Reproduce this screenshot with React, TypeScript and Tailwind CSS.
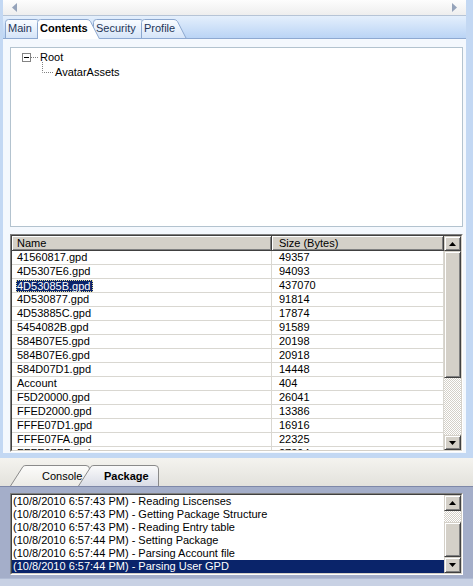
import React from 'react';

const rows: [string, string][] = [
  ['41560817.gpd', '49357'],
  ['4D5307E6.gpd', '94093'],
  ['4D53085B.gpd', '437070'],
  ['4D530877.gpd', '91814'],
  ['4D53885C.gpd', '17874'],
  ['5454082B.gpd', '91589'],
  ['584B07E5.gpd', '20198'],
  ['584B07E6.gpd', '20918'],
  ['584D07D1.gpd', '14448'],
  ['Account', '404'],
  ['F5D20000.gpd', '26041'],
  ['FFED2000.gpd', '13386'],
  ['FFFE07D1.gpd', '16916'],
  ['FFFE07FA.gpd', '22325'],
  ['FFFE07FF.gpd', '27394'],
];

const logs = [
  '(10/8/2010 6:57:43 PM) - Reading Liscenses',
  '(10/8/2010 6:57:43 PM) - Getting Package Structure',
  '(10/8/2010 6:57:43 PM) - Reading Entry table',
  '(10/8/2010 6:57:44 PM) - Setting Package',
  '(10/8/2010 6:57:44 PM) - Parsing Account file',
  '(10/8/2010 6:57:44 PM) - Parsing User GPD',
];

function Tri({ up }: { up: boolean }) {
  return (
    <svg width="7" height="4" viewBox="0 0 7 4">
      <path d={up ? 'M3.5 0 L7 4 H0 Z' : 'M0 0 H7 L3.5 4 Z'} fill="#000" />
    </svg>
  );
}

function ScrollBtn({ up, h }: { up: boolean; h: string }) {
  return (
    <div
      className={`${h} w-[17px] shrink-0 flex items-center justify-center bg-[#d4d0c8] border border-t-[#d4d0c8] border-l-[#d4d0c8] border-b-[#404040] border-r-[#404040] shadow-[inset_1px_1px_0_#ffffff,inset_-1px_-1px_0_#808080]`}
    >
      <Tri up={up} />
    </div>
  );
}

function Track({ h }: { h: string }) {
  return (
    <div
      className={`${h} w-[17px] shrink-0 bg-[repeating-conic-gradient(#ffffff_0_25%,#d4d0c8_0_50%)] bg-size-[2px_2px]`}
    />
  );
}

function Thumb({ h }: { h: string }) {
  return (
    <div
      className={`${h} w-[17px] shrink-0 bg-[#d4d0c8] border border-t-[#d4d0c8] border-l-[#d4d0c8] border-b-[#404040] border-r-[#404040] shadow-[inset_1px_1px_0_#ffffff,inset_-1px_-1px_0_#808080]`}
    />
  );
}

function TopTab({
  label,
  w,
  cls,
  selected,
}: {
  label: string;
  w: number;
  cls: string;
  selected?: boolean;
}) {
  const h = 20;
  const id = 'tt' + label;
  const d = `M0.5 ${h} V3.5 Q0.5 0.5 3.5 0.5 H${w - 13} Q${w - 11} 0.5 ${w - 9.5} 2.5 L${w - 0.5} ${h}`;
  return (
    <div className={`relative shrink-0 h-[20px] mb-[-1px] ${cls} ${selected ? 'z-10' : ''}`}>
      <svg className="absolute inset-0" width={w} height={h} viewBox={`0 0 ${w} ${h}`}>
        <defs>
          <linearGradient id={id} x1="0" y1="0" x2="0" y2="1">
            <stop offset="0" stopColor={selected ? '#ffffff' : '#fbfdff'} />
            <stop offset="1" stopColor={selected ? '#ffffff' : '#d3e3f8'} />
          </linearGradient>
        </defs>
        <path d={d + (selected ? '' : ' Z')} fill={`url(#${id})`} stroke="none" />
        <path d={d} fill="none" stroke="#8da8cf" strokeWidth="1" />
        {!selected && <line x1="0" y1={h - 0.5} x2={w} y2={h - 0.5} stroke="#8ea9d1" />}
      </svg>
      <span
        className={`relative block pl-[3px] pt-[2px] leading-[15px] text-[11px] ${selected ? 'font-bold text-black' : 'text-[#1e3557]'}`}
      >
        {label}
      </span>
    </div>
  );
}

function BottomTab({
  label,
  w,
  cls,
  selected,
  textCls,
}: {
  label: string;
  w: number;
  cls: string;
  selected?: boolean;
  textCls: string;
}) {
  const h = 21;
  const id = 'bt' + label;
  const d = `M0.5 ${h} L${13} 1.5 Q${14} 0.5 ${16} 0.5 H${w - 4} Q${w - 0.5} 0.5 ${w - 0.5} 4 V${h}`;
  return (
    <div className={`relative shrink-0 h-[21px] ${cls} ${selected ? 'z-10' : ''}`}>
      <svg className="absolute inset-0" width={w} height={h} viewBox={`0 0 ${w} ${h}`}>
        <defs>
          <linearGradient id={id} x1="0" y1="0" x2="0" y2="1">
            <stop offset="0" stopColor={selected ? '#fbfbfb' : '#fcfcfb'} />
            <stop offset="1" stopColor={selected ? '#d9dce6' : '#ecebe6'} />
          </linearGradient>
        </defs>
        <path d={d + ' Z'} fill={`url(#${id})`} stroke="none" />
        <path d={d} fill="none" stroke="#8a8a8a" strokeWidth="1" />
      </svg>
      <span
        className={`relative block pt-[4px] leading-[15px] text-[11px] text-black ${selected ? 'font-bold' : ''} ${textCls}`}
      >
        {label}
      </span>
    </div>
  );
}

function Sunken({ cls, children }: { cls: string; children: React.ReactNode }) {
  return (
    <div className={`${cls} border border-t-[#808080] border-l-[#808080] border-b-white border-r-white`}>
      <div className="w-full h-full border border-t-[#404040] border-l-[#404040] border-b-[#d4d0c8] border-r-[#d4d0c8] bg-white overflow-hidden flex">
        {children}
      </div>
    </div>
  );
}

export default function App() {
  return (
    <div className="w-[473px] h-[586px] overflow-hidden flex flex-col bg-[#c3d8f3] font-['Liberation_Sans',Arial,sans-serif] text-[11px] text-black select-none">
      {/* top section */}
      <div className="h-[458px] shrink-0 flex flex-col pl-[3px] pr-[7px]">
        {/* horizontal scroll */}
        <div className="h-[16px] shrink-0 flex items-center justify-between px-[9px] bg-[linear-gradient(#fdfdfd,#eeeeee)] border-b border-[#b6c4d6]">
          <svg width="5" height="9" viewBox="0 0 5 9">
            <path d="M5 0 V9 L0 4.5 Z" fill="#95a3ba" />
          </svg>
          <svg width="5" height="9" viewBox="0 0 5 9">
            <path d="M0 0 V9 L5 4.5 Z" fill="#95a3ba" />
          </svg>
        </div>
        {/* tab strip */}
        <div className="h-[23px] shrink-0 flex items-end border-b border-[#8ea9d1] bg-[linear-gradient(#e4effc,#bad4f5)]">
          <TopTab label="Main" w={44} cls="w-[44px] ml-[2px]" />
          <TopTab label="Contents" w={63} cls="w-[63px] ml-[-12px]" selected />
          <TopTab label="Security" w={60} cls="w-[60px] ml-[-7px]" />
          <TopTab label="Profile" w={46} cls="w-[46px] ml-[-12px]" />
        </div>
        {/* content */}
        <div className="h-[414px] shrink-0 bg-[#f4f8fd] pl-[7px] pr-[3px] pt-[8px] flex flex-col gap-[7px]">
          {/* tree */}
          <div className="h-[180px] w-[453px] shrink-0 bg-white border border-[#b3c3cf] pt-[2px]">
            <div className="h-[15px] flex items-center">
              <div className="ml-[11px] w-[9px] h-[9px] border border-[#848484] bg-white flex items-center justify-center">
                <div className="w-[5px] h-[1px] bg-black" />
              </div>
              <svg width="8" height="1" className="shrink-0">
                <line x1="0" y1="0.5" x2="8" y2="0.5" stroke="#808080" strokeDasharray="1 1" />
              </svg>
              <span className="ml-[1px] leading-[15px]">Root</span>
            </div>
            <div className="h-[15px] flex items-center relative">
              <svg width="13" height="14" className="absolute left-[31px] top-[-3px] overflow-visible">
                <path d="M0.5 0 V10.5 H12" fill="none" stroke="#808080" strokeDasharray="1 1" />
              </svg>
              <span className="ml-[44px] leading-[15px]">AvatarAssets</span>
            </div>
          </div>
          {/* list view */}
          <Sunken cls="h-[218px] w-[453px] shrink-0">
            <div className="flex-1 flex flex-col min-w-0">
              <div className="h-[15px] shrink-0 flex bg-[#d4d0c8]">
                <div className="w-[260px] h-[15px] shrink-0 pl-[5px] leading-[14px] border-b border-r border-[#404040] shadow-[inset_1px_1px_0_#ffffff,inset_-1px_-1px_0_#808080]">
                  Name
                </div>
                <div className="w-[172px] h-[15px] shrink-0 pl-[7px] leading-[14px] border-b border-r border-[#404040] shadow-[inset_1px_1px_0_#ffffff,inset_-1px_-1px_0_#808080]">
                  Size (Bytes)
                </div>
              </div>
              <div className="flex-1 overflow-hidden">
                {rows.map(([n, s], i) => (
                  <div key={n} className="h-[14px] flex border-b border-[#d9d7d1]">
                    <div className="w-[260px] shrink-0 h-[13px] border-r border-[#d9d7d1] flex items-center">
                      {i === 2 ? (
                        <span className="ml-[4px] h-[12px] pl-[0px] pr-[2px] bg-[#0a246a] text-white leading-[10px] border border-dotted border-[#e6dc97]">
                          {n}
                        </span>
                      ) : (
                        <span className="pl-[5px] leading-[13px]">{n}</span>
                      )}
                    </div>
                    <div className="w-[172px] shrink-0 h-[13px] border-r border-[#d9d7d1] pl-[7px] leading-[13px]">
                      {s}
                    </div>
                  </div>
                ))}
              </div>
            </div>
            <div className="w-[17px] shrink-0 flex flex-col">
              <ScrollBtn up h="h-[15px]" />
              <Thumb h="h-[127px]" />
              <Track h="h-[57px]" />
              <ScrollBtn up={false} h="h-[15px]" />
            </div>
          </Sunken>
        </div>
      </div>
      {/* bottom section */}
      <div className="flex-1 flex flex-col">
        <div className="h-[28px] shrink-0 flex items-end bg-[linear-gradient(#f4f3ef,#e3e2dc)]">
          <BottomTab label="Console" w={80} cls="w-[80px] ml-[10px]" textCls="pl-[32px]" />
          <BottomTab label="Package" w={81} cls="w-[81px] ml-[-12px]" textCls="pl-[26px]" selected />
        </div>
        <div className="flex-1 flex flex-col bg-[#a4aec9] border-t border-[#7e88a8]">
          <div className="pt-[6px] pl-[10px]">
            <Sunken cls="h-[82px] w-[453px]">
              <div className="flex-1 min-w-0 flex flex-col">
                {logs.map((l, i) => (
                  <div
                    key={i}
                    className={`h-[13px] shrink-0 pl-[1px] leading-[13px] whitespace-nowrap ${i === logs.length - 1 ? 'bg-[#0a246a] text-white' : ''}`}
                  >
                    {l}
                  </div>
                ))}
              </div>
              <div className="w-[17px] shrink-0 flex flex-col">
                <ScrollBtn up h="h-[16px]" />
                <Track h="h-[11px]" />
                <Thumb h="h-[35px]" />
                <ScrollBtn up={false} h="h-[16px]" />
              </div>
            </Sunken>
          </div>
          <div className="mt-[3px] flex-1 bg-[#c8d1e4] border-t border-[#b0bbd4]" />
        </div>
      </div>
    </div>
  );
}
